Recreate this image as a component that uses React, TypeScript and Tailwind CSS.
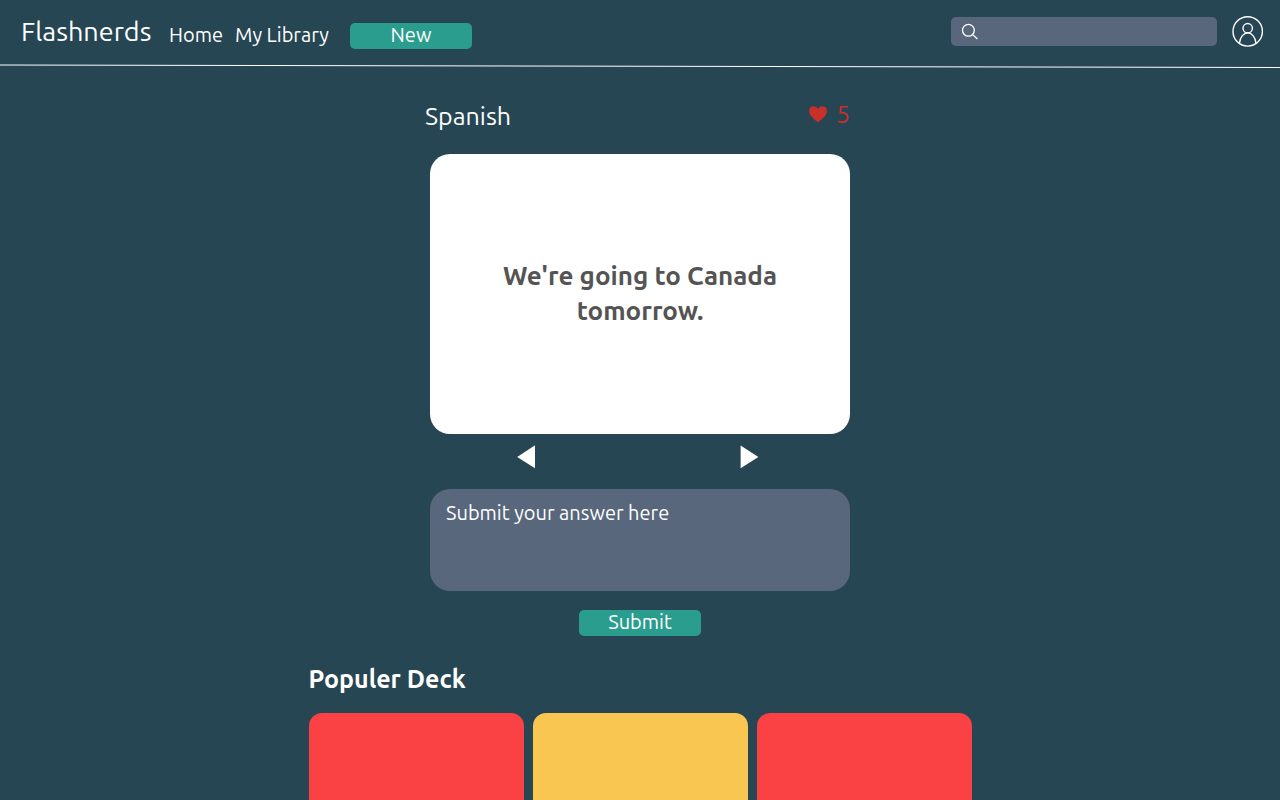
import { useState } from "react";

const decks = [
  { id: 1, label: "Deck 1", color: "bg-[#fa4143]" },
  { id: 2, label: "Deck 2", color: "bg-[#f9c751]" },
  { id: 3, label: "Deck 3", color: "bg-[#fa4143]" },
];

function Header() {
  return (
    <header>
      <div className="flex h-16 items-start justify-between pr-[17px] pl-[21px]">
        <nav className="flex items-start">
          <a href="#home" className="w-[148px] pt-3 text-[27px] leading-[38px] whitespace-nowrap">
            Flashnerds
          </a>
          <a href="#home" className="w-[66px] pt-5 text-xl leading-[30px] whitespace-nowrap">
            Home
          </a>
          <a href="#library" className="w-[115px] pt-5 text-xl leading-[30px] whitespace-nowrap">
            My Library
          </a>
          <button
            type="button"
            className="mt-[23px] flex h-[26px] w-[122px] items-center justify-center rounded-[5px] bg-[#2a9d8f] pb-0.5 text-xl leading-none"
          >
            New
          </button>
        </nav>
        <div className="flex items-center gap-[15px] pt-4">
          <label className="flex h-[29px] w-[266px] items-center gap-2 rounded-[5px] bg-[#58677c] px-[10px]">
            <svg width="18" height="18" viewBox="0 0 18 18" fill="none" stroke="white" strokeWidth="1.3" aria-hidden="true">
              <circle cx="7.4" cy="7.3" r="5.9" />
              <path d="M11.5 11.4 16.4 16" />
            </svg>
            <input type="search" aria-label="Search" className="min-w-0 flex-1 bg-transparent text-base outline-none" />
          </label>
          <button type="button" aria-label="Profile">
            <svg className="block" width="31" height="31" viewBox="0 0 31 31" fill="none" stroke="white" strokeWidth="1.4" aria-hidden="true">
              <circle cx="15.7" cy="15.4" r="14.7" />
              <circle cx="15.7" cy="12.2" r="4.7" />
              <path d="M7.4 27.4C7.9 21.3 11.5 16.9 15.7 16.9s7.8 4.4 8.3 10.5" />
            </svg>
          </button>
        </div>
      </div>
      <svg className="block h-1 w-full" viewBox="0 0 1280 4" preserveAspectRatio="none" aria-hidden="true">
        <line x1="0" y1="1" x2="1280" y2="3.5" stroke="white" strokeWidth="1" />
      </svg>
    </header>
  );
}

export default function App() {
  const [answer, setAnswer] = useState("");

  return (
    <div className="flex min-h-screen flex-col bg-[#264653] font-['Ubuntu','Noto_Sans',sans-serif] text-white">
      <Header />
      <main className="flex flex-1 flex-col items-center">
        <section className="flex w-full max-w-[420px] flex-col">
          <div className="-ml-[5px] flex h-[86px] items-start justify-between pt-7">
            <h1 className="pt-1 text-[25px] leading-8">Spanish</h1>
            <div className="flex items-center gap-2 text-[25px] leading-9 text-[#c9302c]">
              <svg width="20" height="18" viewBox="0 0 20 18" fill="currentColor" aria-hidden="true">
                <path d="M10 17.2C8.5 15.8 1 11 1 5.9 1 3 3 1.2 5.5 1.2 7.5 1.2 9.1 2.4 10 4.1 10.9 2.4 12.5 1.2 14.5 1.2 17 1.2 19 3 19 5.9 19 11 11.5 15.8 10 17.2Z" />
              </svg>
              <span>5</span>
            </div>
          </div>
          <div className="flex h-[280px] items-center justify-center rounded-[20px] bg-white px-12 pb-0.5 text-center text-[26px] leading-[35px] font-bold text-[#545454]">
            <p>
              We're going to Canada
              <br />
              tomorrow.
            </p>
          </div>
          <div className="flex h-[55px] items-start justify-between px-[87px] pt-[11px]">
            <button type="button" aria-label="Previous card">
              <svg className="block" width="18" height="24" viewBox="0 0 18 24" fill="white">
                <path d="M18 .3V23.2L.2 12Z" />
              </svg>
            </button>
            <button type="button" aria-label="Next card" className="mr-1">
              <svg className="block" width="19" height="24" viewBox="0 0 19 24" fill="white">
                <path d="M.6 .5V23.2L18.4 12Z" />
              </svg>
            </button>
          </div>
          <textarea
            aria-label="Submit your answer here"
            placeholder="Submit your answer here"
            value={answer}
            onChange={(event) => setAnswer(event.target.value)}
            className="block h-[102px] w-full resize-none rounded-[20px] bg-[#58677c] px-4 py-2.5 text-xl leading-7 outline-none placeholder:text-white"
          />
          <button
            type="button"
            className="mt-[19px] flex h-[26px] w-[122px] items-center justify-center self-center rounded-[5px] bg-[#2a9d8f] pb-0.5 text-xl leading-none"
          >
            Submit
          </button>
        </section>
        <section className="flex w-full max-w-[663px] flex-1 flex-col pt-[27px]">
          <h2 className="text-[25px] leading-8 font-bold">Populer Deck</h2>
          <div className="mt-[18px] grid min-h-[87px] flex-1 grid-cols-3 gap-[9px]">
            {decks.map((deck) => (
              <a key={deck.id} href="#deck" aria-label={deck.label} className={`${deck.color} rounded-t-[13px]`} />
            ))}
          </div>
        </section>
      </main>
    </div>
  );
}
